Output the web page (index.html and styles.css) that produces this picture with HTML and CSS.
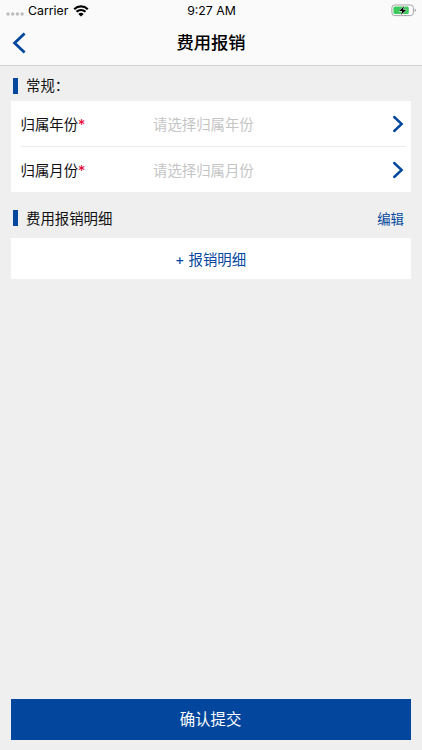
FILE: index.html
```html
<!DOCTYPE html>
<html lang="zh-CN">
<head>
  <meta charset="UTF-8">
  <meta name="viewport" content="width=device-width, initial-scale=1.0">
  <title>费用报销</title>
  <link rel="stylesheet" href="styles.css">
</head>
<body>

  <header class="header">
    <div class="status-bar">
      <div class="status-left">
        <svg class="signal" width="18" height="4" viewBox="0 0 18 4">
          <g fill="#bcbcbc">
            <circle cx="2" cy="2" r="1.7"/>
            <circle cx="6.7" cy="2" r="1.7"/>
            <circle cx="11.4" cy="2" r="1.7"/>
            <circle cx="16.1" cy="2" r="1.7"/>
          </g>
        </svg>
        <span class="carrier">Carrier</span>
        <svg class="wifi" width="16" height="12" viewBox="0 0 16 12">
          <path d="M1.2 4.2a9.8 9.8 0 0 1 13.6 0M3.5 6.8a6.5 6.5 0 0 1 9 0" fill="none" stroke="#000" stroke-width="2.2"/>
          <path d="M8 11.6L5.3 9a3.9 3.9 0 0 1 5.4 0z" fill="#000"/>
        </svg>
      </div>
      <span class="time">9:27 AM</span>
      <svg class="battery" width="26" height="13" viewBox="0 0 26 13">
        <rect x=".9" y="1" width="21.4" height="10.6" rx="2.8" fill="#fff" stroke="#a2a2a4"/>
        <rect x="2.4" y="2.5" width="15.4" height="7.6" rx="1.5" fill="#3ecb5d"/>
        <path d="M23.6 4.5v3.6q1.3-.5 1.3-1.8t-1.3-1.8z" fill="#a2a2a4"/>
        <path d="M13.2 1.9L8 7h3.1l-1.2 4.1L15.3 5.8h-3.2z" fill="#000" stroke="#fff" stroke-width="1" paint-order="stroke"/>
      </svg>
    </div>
    <div class="nav-bar">
      <svg class="back" width="14" height="22" viewBox="0 0 14 22">
        <path d="M12.6 1.5L2.6 11l10 9.5" fill="none" stroke="#02479d" stroke-width="2.8"/>
      </svg>
      <h1 class="title">费用报销</h1>
    </div>
  </header>

  <main class="content">
    <div class="section-head">
      <h2>常规：</h2>
    </div>
    <div class="card">
      <div class="row">
        <span class="label">归属年份<em>*</em></span>
        <span class="placeholder">请选择归属年份</span>
        <svg class="arrow" width="12" height="18" viewBox="0 0 12 18">
          <path d="M2.2 2l7.5 7-7.5 7" fill="none" stroke="#02479d" stroke-width="2.4" stroke-linecap="round"/>
        </svg>
      </div>
      <div class="row">
        <span class="label">归属月份<em>*</em></span>
        <span class="placeholder">请选择归属月份</span>
        <svg class="arrow" width="12" height="18" viewBox="0 0 12 18">
          <path d="M2.2 2l7.5 7-7.5 7" fill="none" stroke="#02479d" stroke-width="2.4" stroke-linecap="round"/>
        </svg>
      </div>
    </div>

    <div class="section-head detail-head">
      <h2>费用报销明细</h2>
      <a class="edit">编辑</a>
    </div>
    <div class="add-detail">+ 报销明细</div>
  </main>

  <button class="submit">确认提交</button>

</body>
</html>
```

FILE: styles.css
```css
* {
  box-sizing: border-box;
}

body {
  display: flex;
  flex-direction: column;
  height: 100vh;
  margin: 0;
  background-color: #efefef;
  color: #111;
  font-family: Inter, "Noto Sans CJK SC", sans-serif;
  font-size: 14.4px;
  overflow: hidden;
}

/* 顶部 */
.header {
  height: 66px;
  background-color: #fafafa;
  border-bottom: 1px solid #d2d2d2;
}

.status-bar {
  display: grid;
  grid-template-columns: 1fr auto 1fr;
  align-items: center;
  height: 21px;
  padding: 0 5px 0 6px;
  color: #000;
  font-size: 12.3px;
  line-height: 21px;
}

.status-left {
  display: flex;
  align-items: center;
}

.signal {
  margin: 7px 4px 0 0;
}

.wifi {
  margin-left: 5px;
}

.battery {
  justify-self: end;
}

.nav-bar {
  display: grid;
  grid-template-columns: 40px 1fr 40px;
  align-items: center;
  height: 44px;
}

.back {
  margin-left: 12px;
}

.title {
  margin: 0;
  color: #000;
  font-size: 17.3px;
  font-weight: 500;
  line-height: 44px;
  text-align: center;
}

/* 表单内容 */
.content {
  flex: 1;
  padding: 0 11px;
}

.section-head {
  display: flex;
  align-items: center;
  height: 35px;
  padding: 5px 7px 0 2px;
}

.section-head h2 {
  flex: 1;
  margin: 0;
  font-size: 14.4px;
  font-weight: 400;
  line-height: 20px;
}

.section-head::before {
  content: "";
  width: 5px;
  height: 16px;
  margin-right: 8px;
  background-color: #02479d;
}

.detail-head {
  height: 46px;
}

.detail-head h2 {
  padding-top: 2px;
}

.card {
  height: 91px;
  padding: 0 5px 0 9.5px;
  background-color: #fff;
}

.row {
  display: flex;
  align-items: center;
  height: 46px;
  border-bottom: 1px solid #ececec;
}

.row:last-child {
  height: 45px;
  border-bottom: none;
}

.label {
  width: 132.5px;
}

.label em {
  color: #e60033;
  font-style: normal;
}

.placeholder {
  flex: 1;
  color: #c5c5c5;
}

.arrow {
  margin-right: 2px;
}

.edit {
  color: #02479d;
  font-size: 13.4px;
}

.add-detail {
  height: 41px;
  padding-right: 1px;
  background-color: #fff;
  color: #02479d;
  line-height: 43px;
  text-align: center;
}

.submit {
  height: 41px;
  margin: 0 11px 10px;
  padding: 0 1px 0 0;
  border: none;
  background-color: #02479d;
  color: #fff;
  font-family: inherit;
  font-size: 15.4px;
  line-height: 41px;
}
```
